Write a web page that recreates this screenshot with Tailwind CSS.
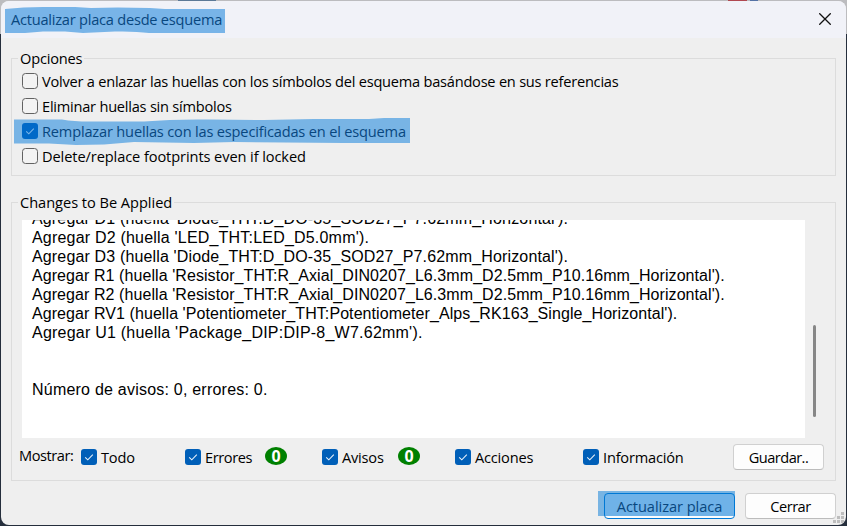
<!DOCTYPE html>
<html lang="es">
<head>
<meta charset="utf-8">
<title>Actualizar placa desde esquema</title>
<script src="https://cdn.jsdelivr.net/npm/@tailwindcss/browser@4"></script>
</head>
<body class="w-[847px] h-[526px] overflow-hidden bg-[#252e3c] font-['Open_Sans','Noto_Sans',sans-serif] text-[14.6px] text-black">
<svg width="0" height="0" class="absolute">
  <symbol id="on" viewBox="0 0 16 16"><rect width="16" height="16" rx="3" fill="#005fb8"/><path d="M4.2 8.3 6.8 10.8 11.8 5.6" fill="none" stroke="#e6f0fa" stroke-width="1.1"/></symbol>
  <symbol id="off" viewBox="0 0 16 16"><rect x=".5" y=".5" width="15" height="15" rx="3" fill="#f3f3f3" stroke="#626262"/></symbol>
</svg>
<div class="relative w-[847px] h-[526px] p-px">
  <div class="absolute left-0 top-0 w-full h-[34px] bg-[#bcbcbf]">
    <i class="absolute left-[178px] top-0 w-[38px] h-px bg-[#5b7896]"></i>
    <i class="absolute left-[728px] top-0 w-[19px] h-px bg-[#b04850]"></i>
    <i class="absolute left-[750px] top-0 w-[8px] h-px bg-[#5572a5]"></i>
  </div>
  <main class="relative w-[845px] h-[524px] rounded-lg overflow-hidden bg-[#efefef] flex flex-col">
    <header class="relative h-[37px] shrink-0 bg-[#f1f2f8] flex items-center justify-between pl-[10px] pr-[15px]">
      <svg class="absolute left-[4px] top-[4px]" width="222" height="29"><path d="M0 4Q18 2 38 2H70L86 3Q110 2 145 3L160 4H220V28H144Q130 26 110 26.500L78 28 60 26.500H38L20 28H0Z" fill="#78b4e8"/></svg>
      <h1 class="relative text-[#08477f] leading-[20px] -mt-px whitespace-nowrap tracking-[-0.23px]">Actualizar placa desde esquema</h1>
      <svg width="12" height="12" viewBox="0 0 12 12" class="shrink-0 -mt-px"><path d="M.3.300 11.700 11.700M11.700.3.300 11.700" stroke="#111" stroke-width="1.300"/></svg>
    </header>
    <div class="px-[10px] pt-[10px] flex flex-col">
      <fieldset class="h-[128px] border border-[#dcdcdc] min-w-0">
        <legend class="ml-[6px] px-[2px] h-[20px] leading-[20px] tracking-[-0.2px]">Opciones</legend>
        <div class="pl-[10px] flex flex-col whitespace-nowrap leading-[23px]">
          <label class="flex items-center gap-[4px] h-[25px]"><svg width="16" height="16"><use href="#off"/></svg><span class="pt-[2px] tracking-[-0.23px]">Volver a enlazar las huellas con los símbolos del esquema basándose en sus referencias</span></label>
          <label class="flex items-center gap-[4px] h-[25px]"><svg width="16" height="16"><use href="#off"/></svg><span class="pt-[2px] tracking-[-0.23px]">Eliminar huellas sin símbolos</span></label>
          <label class="relative flex items-center gap-[4px] h-[25px] text-[#08477f]">
            <svg class="absolute left-[-8px] top-0" width="397" height="29"><path d="M0 1.500H48Q60 3.500 75 3.500H130Q160 1 195 1.500L250 2 300 1H355L370 0H396V25H330L220 24 180 25 120 24 90 26.500 62 27 35 25.500H0Z" fill="#78b4e5"/></svg>
            <svg class="relative" width="16" height="16" viewBox="0 0 16 16"><rect width="16" height="16" rx="3" fill="#0069c8"/><path d="M4.200 8.300 6.800 10.800 11.800 5.600" fill="none" stroke="#78b4e8" stroke-width="1.100"/></svg><span class="relative pt-[2px] tracking-[-0.18px]">Remplazar huellas con las especificadas en el esquema</span></label>
          <label class="flex items-center gap-[4px] h-[25px]"><svg width="16" height="16"><use href="#off"/></svg><span class="pt-[2px] tracking-[-0.09px]">Delete/replace footprints even if locked</span></label>
        </div>
      </fieldset>
      <fieldset class="mt-[16px] h-[289px] border border-[#dcdcdc] min-w-0">
        <legend class="ml-[6px] px-[2px] h-[20px] leading-[20px] whitespace-nowrap tracking-[-0.03px]">Changes to Be Applied</legend>
        <div class="pl-[10px] pt-[8px] flex">
          <div class="w-[783px] h-[218px] bg-white overflow-hidden pl-[10px] font-['Liberation_Sans',Arial,sans-serif] text-[16px] leading-[19px]">
            <div class="-mt-[11px] whitespace-nowrap flex flex-col">
              <p class="tracking-[0.15px]">Agregar D1 (huella 'Diode_THT:D_DO-35_SOD27_P7.62mm_Horizontal').</p>
              <p class="tracking-[0.2px]">Agregar D2 (huella 'LED_THT:LED_D5.0mm').</p>
              <p class="tracking-[0.15px]">Agregar D3 (huella 'Diode_THT:D_DO-35_SOD27_P7.62mm_Horizontal').</p>
              <p class="tracking-[0.075px]">Agregar R1 (huella 'Resistor_THT:R_Axial_DIN0207_L6.3mm_D2.5mm_P10.16mm_Horizontal').</p>
              <p class="tracking-[0.075px]">Agregar R2 (huella 'Resistor_THT:R_Axial_DIN0207_L6.3mm_D2.5mm_P10.16mm_Horizontal').</p>
              <p class="tracking-[0.075px]">Agregar RV1 (huella 'Potentiometer_THT:Potentiometer_Alps_RK163_Single_Horizontal').</p>
              <p class="tracking-[0.23px]">Agregar U1 (huella 'Package_DIP:DIP-8_W7.62mm').</p>
              <p class="mt-[38px] tracking-[0.22px]">Número de avisos: 0, errores: 0.</p>
            </div>
          </div>
          <i class="ml-[8px] mt-[105px] w-[3px] h-[92px] rounded-full bg-[#868686]"></i>
        </div>
        <div class="flex items-center h-[38px] pl-[7px] pr-[11px] whitespace-nowrap leading-[20px] tracking-[-0.2px]">
          <span class="w-[62px] -mt-[4px] tracking-[-0.45px]">Mostrar:</span>
          <label class="flex items-center gap-[4px] w-[104px]"><svg width="16" height="16"><use href="#on"/></svg><span>Todo</span></label>
          <label class="flex items-center gap-[4px] w-[80px]"><svg width="16" height="16"><use href="#on"/></svg><span class="tracking-[-0.4px]">Errores</span></label>
          <b class="w-[22px] h-[18px] mr-[35px] -mt-[3px] rounded-[50%] bg-[#008000] text-white flex justify-center leading-[18px]"><span class="inline-block text-[16px]">0</span></b>
          <label class="flex items-center gap-[4px] w-[76px]"><svg width="16" height="16"><use href="#on"/></svg><span>Avisos</span></label>
          <b class="w-[22px] h-[18px] mr-[35px] -mt-[3px] rounded-[50%] bg-[#008000] text-white flex justify-center leading-[18px]"><span class="inline-block text-[16px]">0</span></b>
          <label class="flex items-center gap-[4px] w-[128px]"><svg width="16" height="16"><use href="#on"/></svg><span>Acciones</span></label>
          <label class="flex items-center gap-[4px]"><svg width="16" height="16"><use href="#on"/></svg><span>Información</span></label>
          <button class="ml-auto w-[91px] h-[26px] rounded-[4px] border border-[#d0d0d0] border-b-[#bcbcbc] bg-[#fdfdfd] leading-[24px] tracking-[-0.55px]">Guardar..</button>
        </div>
      </fieldset>
      <div class="flex justify-end gap-[10px] mt-[12px] leading-[24px] tracking-[-0.2px] whitespace-nowrap">
        <div class="relative">
          <i class="absolute left-[-6px] top-[-2px] w-[137px] h-[25px] bg-[#78b4e3]"></i>
          <button class="relative w-[131px] h-[26px] rounded-[4px] border border-[#0078d4] bg-[linear-gradient(#6fb2e8_22px,#fdfdfd_22px)] text-[#08477f] tracking-[-0.05px]">Actualizar placa</button>
        </div>
        <button class="w-[91px] h-[26px] rounded-[4px] border border-[#d0d0d0] border-b-[#bcbcbc] bg-[#fdfdfd] tracking-[-0.5px]">Cerrar</button>
      </div>
    </div>
    <svg class="absolute right-[2px] bottom-[2px]" width="11" height="11" fill="#bdbdbd"><path d="M8 0h3v3H8zM4 4h3v3H4zM8 4h3v3H8zM0 8h3v3H0zM4 8h3v3H4zM8 8h3v3H8z"/></svg>
  </main>
</div>
</body>
</html>
